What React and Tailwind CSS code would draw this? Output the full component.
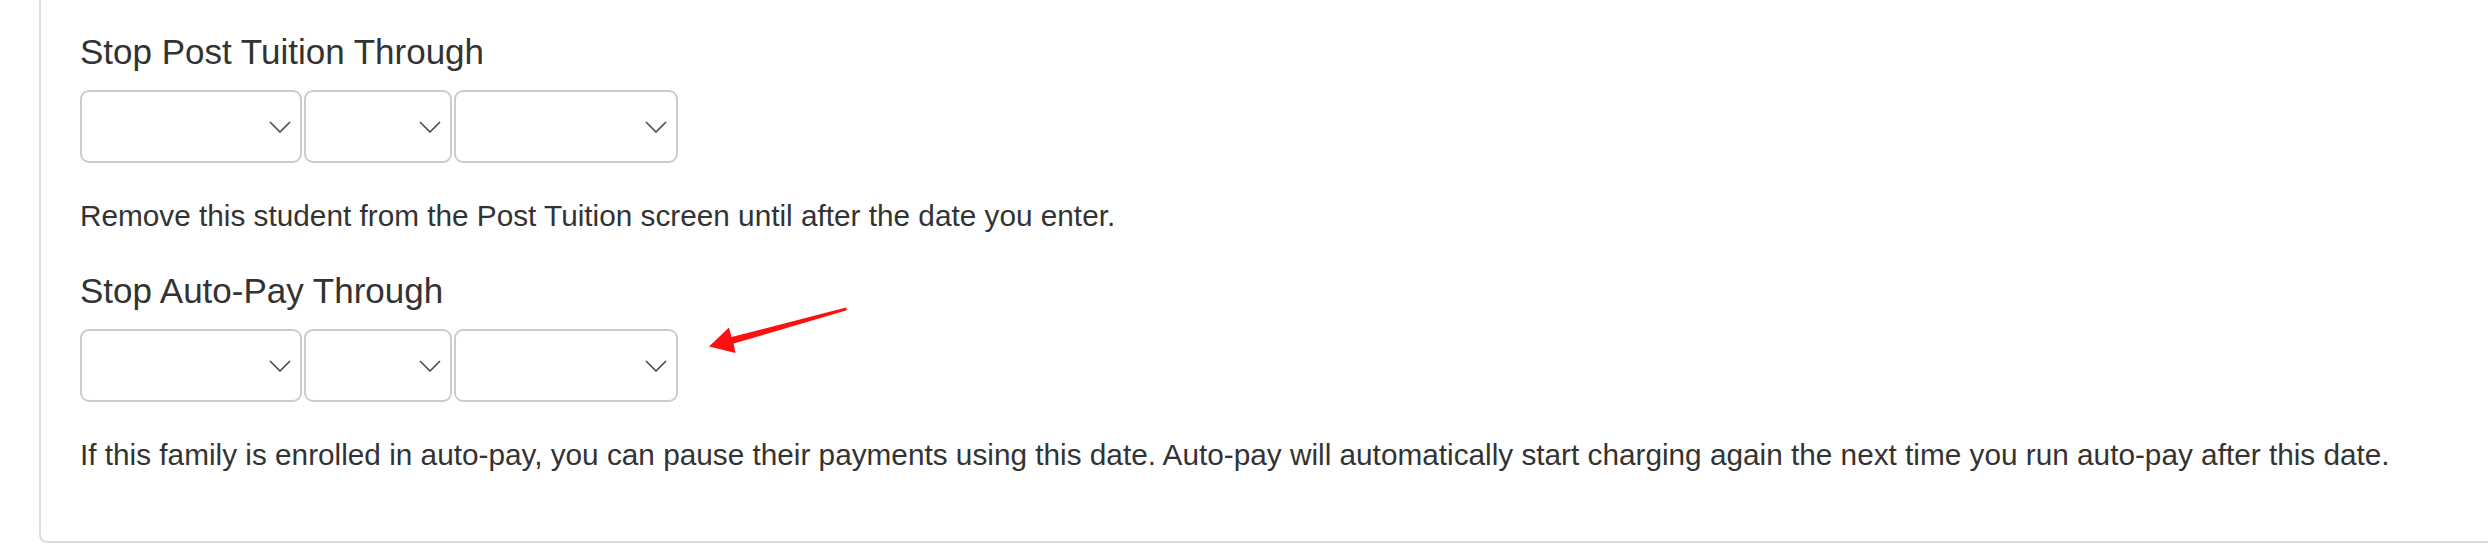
import React from "react";

function Chevron() {
  return (
    <svg width="22" height="12" viewBox="0 0 22 12" fill="none">
      <polyline points="1,1 11,11 21,1" stroke="#4a4a4a" strokeWidth="1.6" strokeLinejoin="miter" />
    </svg>
  );
}

function SelectBox({ w }) {
  return (
    <div className={`${w} h-[73px] border-2 border-[#cccccc] rounded-[9px] bg-white flex items-center justify-end pr-[9px]`}>
      <Chevron />
    </div>
  );
}

function DateRow() {
  return (
    <div className="flex gap-[2px] mt-[19px]">
      <SelectBox w="w-[222px]" />
      <SelectBox w="w-[148px]" />
      <SelectBox w="w-[224px]" />
    </div>
  );
}

export default function App() {
  return (
    <div className="relative w-[2488px] h-[554px] overflow-hidden bg-white font-['Liberation_Sans',Arial,sans-serif]">
      <div className="ml-[39px] border-l-2 border-b-2 border-[#dddddd] rounded-bl-[8px] pl-[39px] pt-[33px] pb-[70px] text-[#333333]">
        <div className="text-[35px] leading-[38px]">Stop Post Tuition Through</div>
        <DateRow />
        <p className="mt-[36px] text-[29.75px] leading-[33px] whitespace-nowrap">
          Remove this student from the Post Tuition screen until after the date you enter.
        </p>
        <div className="mt-[40px] text-[35px] leading-[38px]">Stop Auto-Pay Through</div>
        <DateRow />
        <p className="mt-[36px] text-[29.75px] leading-[33px] whitespace-nowrap">
          If this family is enrolled in auto-pay, you can pause their payments using this date. Auto-pay will automatically start charging again the next time you run auto-pay after this date.
        </p>
      </div>
      <svg className="absolute left-[700px] top-[300px]" width="160" height="60" viewBox="700 300 160 60">
        <polygon
          points="709,346.5 729,327.5 731.5,337 846,307.6 846.8,310.2 733.6,343.6 735.5,353"
          fill="#ff1010"
        />
      </svg>
    </div>
  );
}
